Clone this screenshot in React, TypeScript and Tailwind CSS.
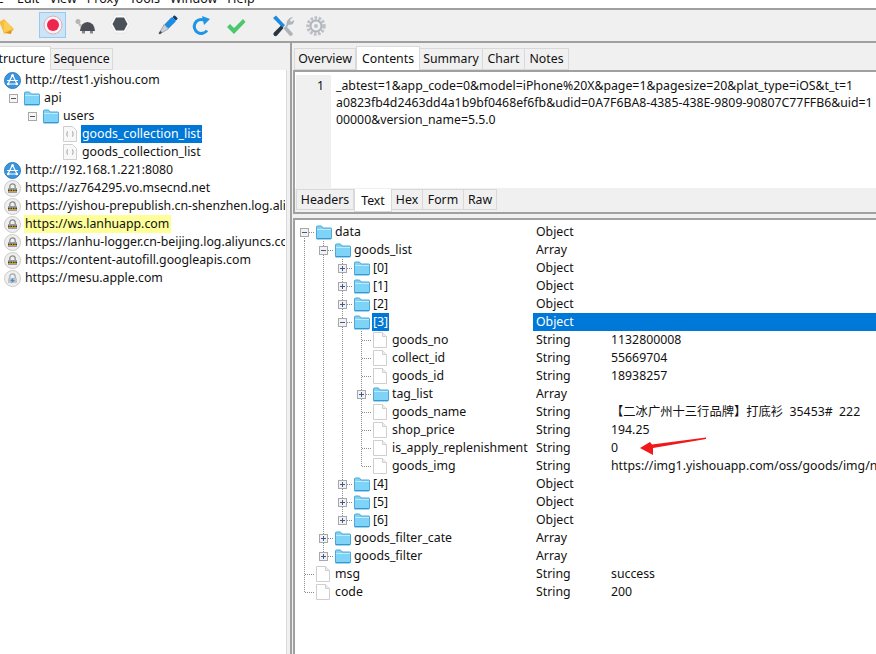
import type { ReactNode } from "react";

const font = "font-['Noto_Sans','Noto_Sans_CJK_SC',sans-serif]";

function Folder() {
    return (
        <svg width="16" height="15" viewBox="0 0 16 15" className="shrink-0">
            <path d="M0.5 13V2a1 1 0 0 1 1-1h4l1.500 2h8a.5.500 0 0 1 .5.500V13a1 1 0 0 1-1 1h-14a1 1 0 0 1-.5-1z" fill="#7fd3f7" stroke="#4fa8d8" />
            <path d="M1 4.500h14" stroke="#bfeafc" />
            <path d="M1 13.500h14" stroke="#2f9bd0" />
        </svg>
    );
}

function FileIcon() {
    return (
        <svg width="14" height="16" viewBox="0 0 14 16" className="shrink-0">
            <path d="M0.500 0.500h9l4 4v11h-13z" fill="#fff" stroke="#cfcfcf" />
            <path d="M9.500 0.500v4h4" fill="#eee" stroke="#cfcfcf" />
        </svg>
    );
}

function CodeFile() {
    return (
        <svg width="14" height="16" viewBox="0 0 14 16" className="shrink-0">
            <path d="M0.500 0.500h9l4 4v11h-13z" fill="#f8f8f8" stroke="#cfcfcf" />
            <path d="M5 5.500c-1.200 0-.8 2-1.200 2.500.4.500 0 2.500 1.200 2.500M9 5.500c1.200 0 .8 2 1.200 2.500-.4.500 0 2.500-1.200 2.500" fill="none" stroke="#999" />
        </svg>
    );
}

function GlobeIcon() {
    return (
        <svg width="17" height="17" viewBox="0 0 17 17" className="shrink-0">
            <circle cx="8.500" cy="8.500" r="8" fill="#3c95dc" />
            <circle cx="8.500" cy="8.500" r="8" fill="none" stroke="#2a7fc6" />
            <path d="M8.500 3L4 12h9zM3 8.500h11" fill="none" stroke="#fff" strokeWidth="1.200" />
            <circle cx="8.500" cy="3.500" r="1.300" fill="#fff" />
            <circle cx="4.200" cy="12" r="1.300" fill="#fff" />
            <circle cx="12.800" cy="12" r="1.300" fill="#fff" />
        </svg>
    );
}

function LockIcon() {
    return (
        <svg width="17" height="17" viewBox="0 0 17 17" className="shrink-0">
            <circle cx="8.500" cy="8.500" r="8" fill="#efefef" stroke="#c9c9c9" />
            <path d="M5.800 8V6.500a2.700 2.700 0 0 1 5.400 0V8" fill="none" stroke="#8a8a8a" strokeWidth="1.300" />
            <rect x="4" y="8" width="9" height="5" rx="0.500" fill="#9b9b9b" />
            <path d="M4 10.500h9" stroke="#3a3a3a" strokeWidth="1.400" strokeDasharray="1.500 1" />
            <path d="M4.500 11.500h8" stroke="#d6a520" />
        </svg>
    );
}

function AppleIcon() {
    return (
        <svg width="17" height="17" viewBox="0 0 17 17" className="shrink-0">
            <circle cx="8.500" cy="8.500" r="8" fill="#efefef" stroke="#c9c9c9" />
            <path d="M5.800 8V6.500a2.700 2.700 0 0 1 5.400 0V8" fill="none" stroke="#a5a5a5" strokeWidth="1.200" />
            <rect x="4" y="8" width="9" height="5" rx="0.500" fill="#c5c5c5" />
            <path d="M9.500 7.500L6 11h2l-.8 2.500L11 10H9z" fill="#2f8fe0" />
        </svg>
    );
}

function Expander({ open, dark }: { open: boolean; dark?: boolean }) {
    return (
        <svg width="9" height="9" viewBox="0 0 9 9" className="shrink-0 bg-white">
            <rect x="0.500" y="0.500" width="8" height="8" fill={dark ? "#f2f2f2" : "#f6f6f6"} stroke="#a8a8a8" />
            <path d={open ? "M2 4.500h5" : "M2 4.500h5M4.500 2v5"} stroke={dark ? "#3d5a94" : "#555"} />
        </svg>
    );
}

// one indent column of the value tree: | runs on, T branches, L ends here, D starts here
function Guide({ kind }: { kind: string }) {
    const v = kind === "L" ? "M9.500 0v9.500" : kind === "D" ? "M9.500 9v9" : "M9.500 0v18";
    return (
        <svg width="19" height="18" viewBox="0 0 19 18" className="shrink-0">
            <path d={v} stroke="#8c8c8c" strokeDasharray="1 1" />
            {kind !== "|" && <path d="M10 9.500h9" stroke="#8c8c8c" strokeDasharray="1 1" />}
        </svg>
    );
}

type Row = {
    guides: string;
    name: string;
    type: string;
    value?: ReactNode;
    node?: "open" | "closed";
    selected?: boolean;
};

// guides: last letter is the column the expander or file connector sits in
const rows: Row[] = [
    { guides: "D", name: "data", type: "Object", node: "open" },
    { guides: "|T", name: "goods_list", type: "Array", node: "open" },
    { guides: "||T", name: "[0]", type: "Object", node: "closed" },
    { guides: "||T", name: "[1]", type: "Object", node: "closed" },
    { guides: "||T", name: "[2]", type: "Object", node: "closed" },
    { guides: "||T", name: "[3]", type: "Object", node: "open", selected: true },
    { guides: "|||T", name: "goods_no", type: "String", value: "1132800008" },
    { guides: "|||T", name: "collect_id", type: "String", value: "55669704" },
    { guides: "|||T", name: "goods_id", type: "String", value: "18938257" },
    { guides: "|||T", name: "tag_list", type: "Array", node: "closed" },
    { guides: "|||T", name: "goods_name", type: "String", value: "【二冰广州十三行品牌】打底衫  35453#  222" },
    { guides: "|||T", name: "shop_price", type: "String", value: "194.25" },
    { guides: "|||T", name: "is_apply_replenishment", type: "String", value: "0" },
    { guides: "|||L", name: "goods_img", type: "String", value: "https://img1.yishouapp.com/oss/goods/img/new/20" },
    { guides: "||T", name: "[4]", type: "Object", node: "closed" },
    { guides: "||T", name: "[5]", type: "Object", node: "closed" },
    { guides: "||L", name: "[6]", type: "Object", node: "closed" },
    { guides: "|T", name: "goods_filter_cate", type: "Array", node: "closed" },
    { guides: "|L", name: "goods_filter", type: "Array", node: "closed" },
    { guides: "T", name: "msg", type: "String", value: "success" },
    { guides: "L", name: "code", type: "String", value: "200" },
];

function ValueRow({ row }: { row: Row }) {
    const cols = row.guides.split("");
    const last = cols.pop() as string;
    return (
        <div className="flex h-[18px] items-center">
            <div className="flex h-[18px] w-[238px] shrink-0 items-center overflow-hidden">
                {cols.map((g, i) => (
                    <Guide key={i} kind={g} />
                ))}
                <div className="relative h-[18px] w-[19px] shrink-0">
                    <Guide kind={last} />
                    {row.node && (
                        <div className="absolute left-[5px] top-[5px] flex">
                            <Expander open={row.node === "open"} dark />
                        </div>
                    )}
                </div>
                {row.node ? (
                    <div className="ml-[2px] flex"><Folder /></div>
                ) : (
                    <div className="ml-[2px] mr-[2px] flex"><FileIcon /></div>
                )}
                <span className={`ml-[2px] whitespace-nowrap px-[1px] ${row.selected ? "bg-[#0078d7] text-white" : ""}`}>
                    {row.name}
                </span>
            </div>
            <div className={`flex h-[18px] min-w-0 flex-1 items-center ${row.selected ? "bg-[#0078d7] text-white" : ""}`}>
                <span className="w-[75px] shrink-0 pl-[3px]">{row.type}</span>
                <span className="whitespace-pre pl-[3px]">{row.value}</span>
            </div>
        </div>
    );
}

function HostRow({ icon, label, hl }: { icon: ReactNode; label: string; hl?: boolean }) {
    return (
        <div className="flex h-[18px] items-center pl-[4px]">
            {icon}
            <span className={`ml-[3px] whitespace-nowrap pl-[1px] pr-[2px] ${hl ? "bg-[#ffff99]" : ""}`}>{label}</span>
        </div>
    );
}

function Tab({ label, active, w }: { label: string; active?: boolean; w: string }) {
    return (
        <div
            className={`flex items-center justify-center border border-[#d9d9d9] whitespace-nowrap ${w} ${
                active ? "h-[24px] border-b-0 bg-white" : "mt-[2px] h-[22px] border-l-0 bg-[#f0f0f0] first:border-l"
            }`}
        >
            {label}
        </div>
    );
}

// the lower tab strip hangs from its top edge, the active tab drops down
function LowTab({ label, active, w }: { label: string; active?: boolean; w: string }) {
    return (
        <div
            className={`flex items-center justify-center border border-[#d9d9d9] whitespace-nowrap ${w} ${
                active ? "h-[23px] border-t-0 bg-white pt-[2px]" : "h-[21px] border-l-0 bg-[#f0f0f0] first:border-l"
            }`}
        >
            {label}
        </div>
    );
}

function Toolbar() {
    return (
        <div className="flex h-[33px] items-center overflow-hidden border-b-2 border-[#a0a0a0] bg-[#f0f0f0]">
            <svg width="16" height="16" viewBox="0 0 16 16" className="ml-[-1px] mt-[2px] shrink-0">
                <path d="M0 3l5-3 5 5 4 4 1 2-10 4-1-3-2-5z" fill="#f5bf3c" />
                <path d="M6 14l7-3-1 4z" fill="#e38f1c" />
                <path d="M5 2l5 3 3 5-8 3z" fill="#f9cf5a" />
            </svg>
            <div className="-mt-[2px] ml-[24px] flex h-[26px] w-[27px] items-center justify-center border border-[#99c9ef] bg-[#cce4f7]">
                <svg width="20" height="20" viewBox="0 0 20 20">
                    <circle cx="10" cy="10" r="9" fill="#f6f6f6" stroke="#e7a8b4" />
                    <circle cx="10" cy="10" r="6" fill="#f0254e" />
                </svg>
            </div>
            <svg width="22" height="16" viewBox="0 0 22 16" className="ml-[9px] shrink-0">
                <circle cx="3" cy="3.500" r="2.500" fill="#b5b5b5" />
                <path d="M4 6l2 2" stroke="#b5b5b5" strokeWidth="2" />
                <path d="M5 13a7 8.500 0 0 1 15 0z" fill="#4b4f55" />
                <path d="M7 13h3v2.500H7zM15 13h3v2.500h-3z" fill="#85898e" />
            </svg>
            <svg width="20" height="20" viewBox="0 0 20 20" className="-mt-[3px] ml-[13px] shrink-0">
                <path d="M5 1h10l5 9-5 9H5l-5-9z" fill="#fbfbfb" stroke="#dedede" strokeWidth="0.600" />
                <path d="M6 3.500h8l3.500 6.500-3.500 6.500H6L2.500 10z" fill="#4b4f57" />
            </svg>
            <svg width="22" height="22" viewBox="0 0 22 22" className="ml-[26px] shrink-0">
                <g transform="rotate(45 11 11)">
                    <rect x="8.500" y="-2" width="5" height="3" rx="1" fill="#123e6a" />
                    <rect x="8" y="1" width="6" height="11" rx="1" fill="#1f8be0" />
                    <path d="M8 12h6l-2 8h-2z" fill="#c9d0d8" stroke="#6a7480" strokeWidth="0.500" />
                    <rect x="10" y="19" width="2" height="3" fill="#3d4650" />
                </g>
            </svg>
            <svg width="20" height="20" viewBox="0 0 20 20" className="ml-[13px] shrink-0">
                <path d="M16 14.500A7 7 0 1 1 13 4" fill="none" stroke="#1f95e6" strokeWidth="3" />
                <path d="M11 0l8 3-6 6z" fill="#1f95e6" />
            </svg>
            <svg width="20" height="18" viewBox="0 0 20 18" className="ml-[15px] shrink-0">
                <path d="M1 10l3-3 4 4 9-9 2.500 3L8 17z" fill="#4cc76d" />
            </svg>
            <svg width="22" height="22" viewBox="0 0 22 22" className="ml-[26px] shrink-0">
                <path d="M1 3l3-2.500 5.500 6L13 10l-2.500 3L7 9z" fill="#1f8be0" />
                <path d="M9 10.500l2.500 2.500L5 20.500a2 2 0 0 1-3-3z" fill="#2a3540" />
                <path d="M21 2l-3 3 1 2 3-2c.5 3.500-2.500 5.500-5 4.500l-2 2.500 5.500 6a2 2 0 0 1-3 2.500l-6-7 3-3.500c-.5-4 3-8 6.500-8z" fill="#aeb4ba" />
            </svg>
            <svg width="20" height="20" viewBox="0 0 20 20" className="ml-[12px] shrink-0">
                <circle cx="10" cy="10" r="8" fill="none" stroke="#bcc0c7" strokeWidth="3.500" strokeDasharray="2.500 1.500" />
                <circle cx="10" cy="10" r="5.500" fill="none" stroke="#b0b4bc" strokeWidth="2" />
                <circle cx="10" cy="10" r="2" fill="#bcc0c7" />
            </svg>
        </div>
    );
}

function Arrow() {
    return (
        <svg width="68" height="20" viewBox="0 0 68 20" className="absolute left-[345px] top-[-2px]">
            <path d="M0 11L10 5l2 2.500L66 .5v1.500L13 11l0 7z" fill="#f01818" />
        </svg>
    );
}

export default function App() {
    return (
        <div className={`${font} h-[654px] w-[876px] overflow-hidden bg-[#f0f0f0] text-[12.3px] leading-[18px] text-[#111]`}>
            <div className="h-[8px] overflow-hidden bg-white">
                <div className="-ml-[16px] -mt-[10px] flex gap-[10px] text-[12.5px] leading-[18px]">
                    <span className="mr-[3px]">File</span>
                    {["Edit", "View", "Proxy", "Tools", "Window", "Help"].map((m) => (
                        <span key={m}>{m}</span>
                    ))}
                </div>
            </div>
            <div className="h-[2px] bg-[#a0a0a0]" />
            <Toolbar />
            <div className="flex h-[611px]">
                <div className="flex w-[287px] shrink-0 flex-col pt-[3px]">
                    <div className="-ml-[14px] flex">
                        <Tab label="Structure" active w="w-[65px]" />
                        <Tab label="Sequence" w="w-[62px]" />
                    </div>
                    <div className="min-h-0 flex-1 border-r border-[#d9d9d9] bg-white pt-[1px]">
                        <div className="mr-[1px] overflow-hidden">
                            <HostRow icon={<GlobeIcon />} label="http://test1.yishou.com" />
                            <div className="flex h-[18px] items-center pl-[9px]">
                                <Expander open={true} />
                                <div className="ml-[6px] flex"><Folder /></div>
                                <span className="ml-[4px]">api</span>
                            </div>
                            <div className="flex h-[18px] items-center pl-[28px]">
                                <Expander open={true} />
                                <div className="ml-[6px] flex"><Folder /></div>
                                <span className="ml-[4px]">users</span>
                            </div>
                            <div className="flex h-[18px] items-center pl-[63px]">
                                <CodeFile />
                                <span className="ml-[4px] bg-[#0078d7] px-[1px] text-white">goods_collection_list</span>
                            </div>
                            <div className="flex h-[18px] items-center pl-[63px]">
                                <CodeFile />
                                <span className="ml-[4px] px-[1px]">goods_collection_list</span>
                            </div>
                            <HostRow icon={<GlobeIcon />} label="http://192.168.1.221:8080" />
                            <HostRow icon={<LockIcon />} label="https://az764295.vo.msecnd.net" />
                            <HostRow icon={<LockIcon />} label="https://yishou-prepublish.cn-shenzhen.log.aliyuncs.com" />
                            <HostRow icon={<LockIcon />} label="https://ws.lanhuapp.com" hl />
                            <HostRow icon={<LockIcon />} label="https://lanhu-logger.cn-beijing.log.aliyuncs.com" />
                            <HostRow icon={<LockIcon />} label="https://content-autofill.googleapis.com" />
                            <HostRow icon={<AppleIcon />} label="https://mesu.apple.com" />
                        </div>
                    </div>
                </div>
                <div className="ml-[3px] w-[2px] shrink-0 bg-[#a0a0a0]" />
                <div className="ml-[1px] flex min-w-0 flex-1 flex-col pt-[3px]">
                    <div className="flex pl-[1px]">
                        <Tab label="Overview" w="w-[62px]" />
                        <Tab label="Contents" active w="w-[64px]" />
                        <Tab label="Summary" w="w-[63px]" />
                        <Tab label="Chart" w="w-[42px]" />
                        <Tab label="Notes" w="w-[44px]" />
                    </div>
                    <div className="border-y-2 border-l-2 border-[#a0a0a0]">
                        <div className="flex h-[116px] bg-white pt-[3px] pl-[1px]">
                            <div className="w-[35px] shrink-0 bg-[#f0f0f0] pr-[7px] pt-[2px] text-right leading-[17px]">1</div>
                            <div className="min-w-0 flex-1 overflow-hidden pl-[5px] pt-[2px] leading-[17px]">
                                <div className="whitespace-nowrap">_abtest=1&amp;app_code=0&amp;model=iPhone%20X&amp;page=1&amp;pagesize=20&amp;plat_type=iOS&amp;t_t=1</div>
                                <div className="whitespace-nowrap">a0823fb4d2463dd4a1b9bf0468ef6fb&amp;udid=0A7F6BA8-4385-438E-9809-90807C77FFB6&amp;uid=1</div>
                                <div className="whitespace-nowrap">00000&amp;version_name=5.5.0</div>
                            </div>
                        </div>
                        <div className="flex h-[24px] pl-[1px] pt-[1px]">
                            <LowTab label="Headers" w="w-[58px]" />
                            <LowTab label="Text" active w="w-[38px]" />
                            <LowTab label="Hex" w="w-[31px]" />
                            <LowTab label="Form" w="w-[41px]" />
                            <LowTab label="Raw" w="w-[33px]" />
                        </div>
                    </div>
                    <div className="mt-[4px] min-h-0 flex-1 overflow-hidden border-t-2 border-l-2 border-[#a0a0a0] bg-white pt-[3px]">
                        {rows.map((r) => (
                            <div key={r.name + r.guides} className={r.name === "is_apply_replenishment" ? "relative" : ""}>
                                <ValueRow row={r} />
                                {r.name === "is_apply_replenishment" && <Arrow />}
                            </div>
                        ))}
                    </div>
                </div>
            </div>
        </div>
    );
}
